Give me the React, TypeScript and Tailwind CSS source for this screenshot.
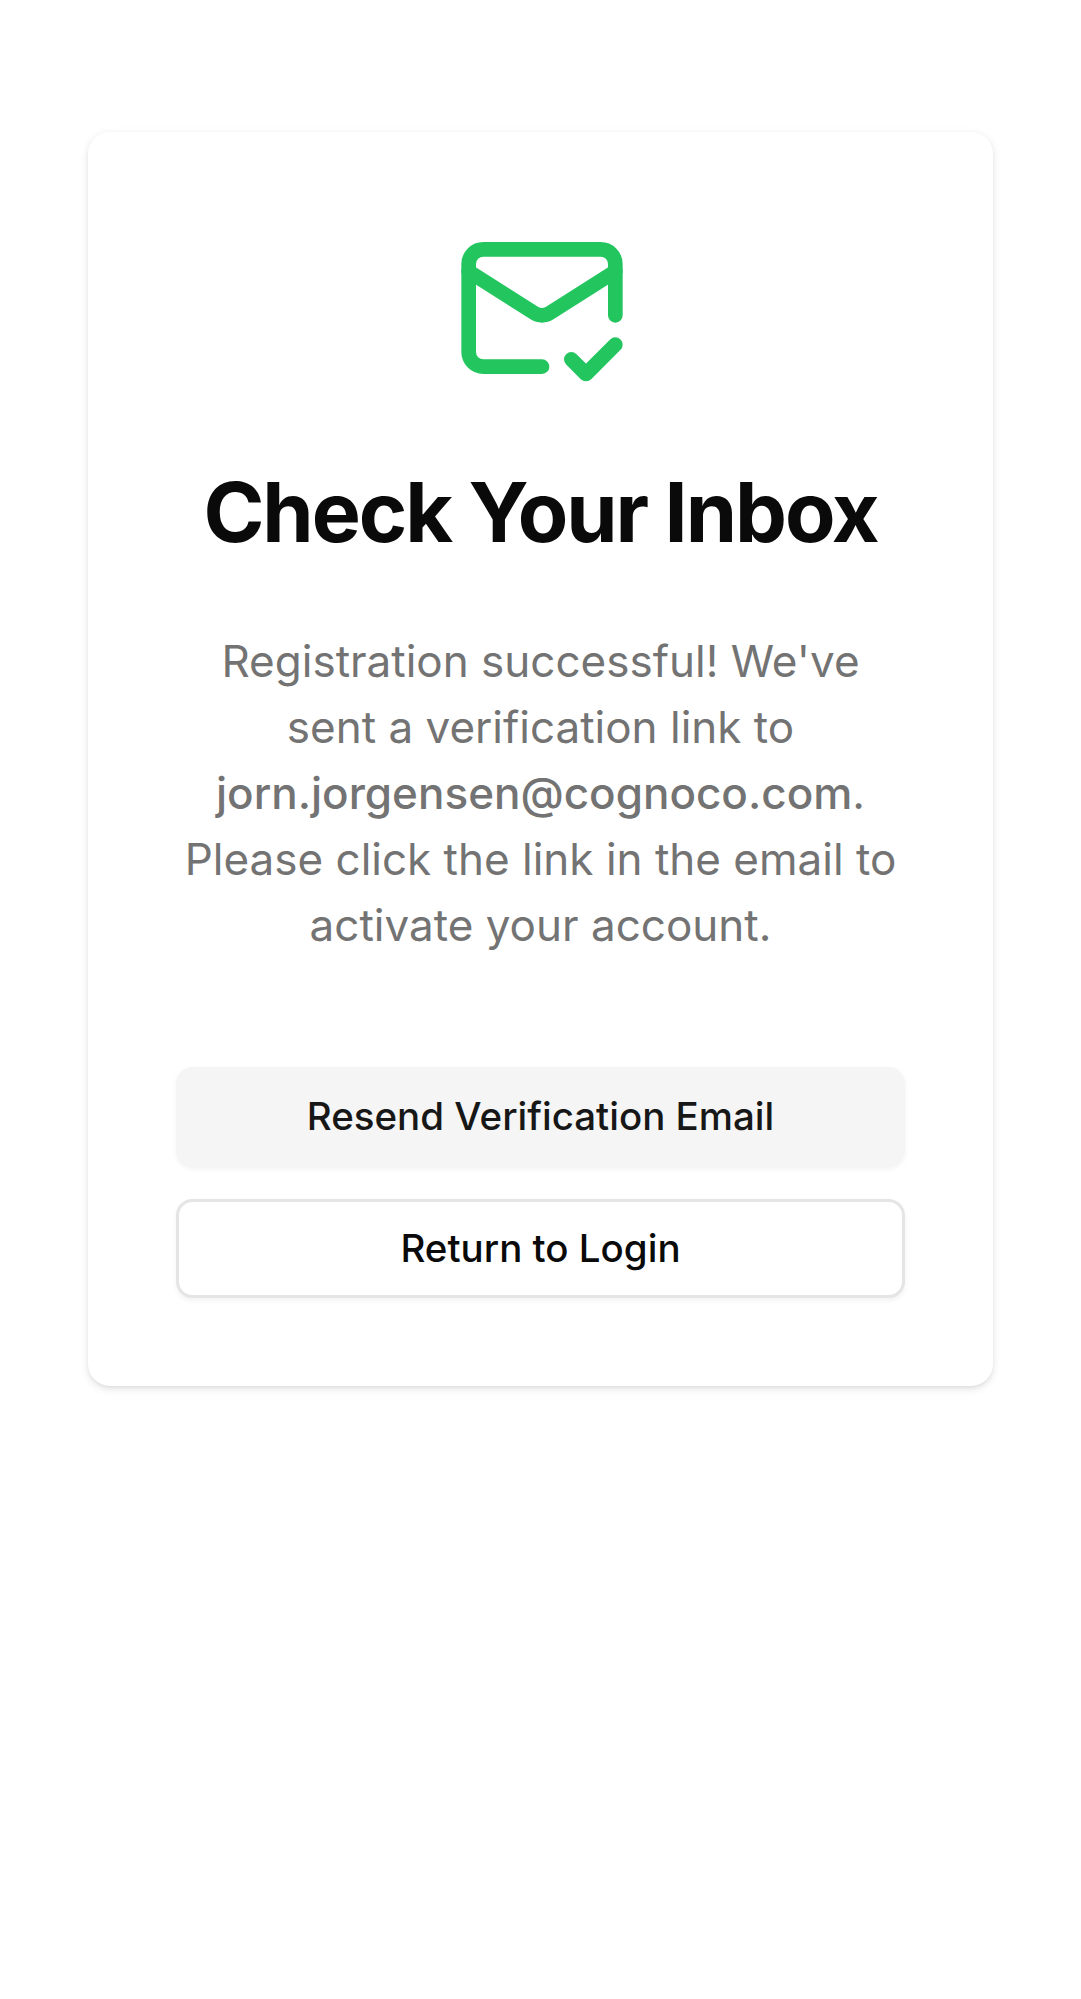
import { MailCheck } from "lucide-react";

export default function App() {
  return (
    <main className="flex min-h-[1999px] flex-col items-center bg-white px-[88px] pt-[132px] font-['Inter',sans-serif] text-[#0a0a0a]">
      <section className="flex w-[905px] flex-col items-center rounded-[22px] bg-white p-[88px] shadow-[0_2.75px_8.25px_rgba(0,0,0,0.1),0_2.75px_5.5px_-2.75px_rgba(0,0,0,0.1)]">
        <MailCheck className="ml-[2px] size-[176px] text-[#22c55e]" strokeWidth={2} />
        <h1 className="mt-[67px] whitespace-nowrap text-[82.5px] font-bold leading-[99px] tracking-[-0.025em]">Check Your Inbox</h1>
        <p className="mt-[66px] whitespace-nowrap text-center text-[44px] leading-[66px] text-[#737373]">
          Registration successful! We've<br />
          sent a verification link to<br />
          <strong className="font-medium">jorn.jorgensen@cognoco.com</strong>.<br />
          Please click the link in the email to<br />
          activate your account.
        </p>
        <div className="mt-[109px] flex w-full flex-col gap-[33px]">
          <button className="h-[99px] rounded-[16.5px] bg-[#f5f5f5] text-[38.5px] font-medium text-[#171717] shadow-[0_2.75px_5.5px_rgba(0,0,0,0.05)]">Resend Verification Email</button>
          <button className="h-[99px] rounded-[16.5px] border-[3px] border-[#e5e5e5] bg-white text-[38.5px] font-medium shadow-[0_2.75px_5.5px_rgba(0,0,0,0.05)]">Return to Login</button>
        </div>
      </section>
    </main>
  );
}
